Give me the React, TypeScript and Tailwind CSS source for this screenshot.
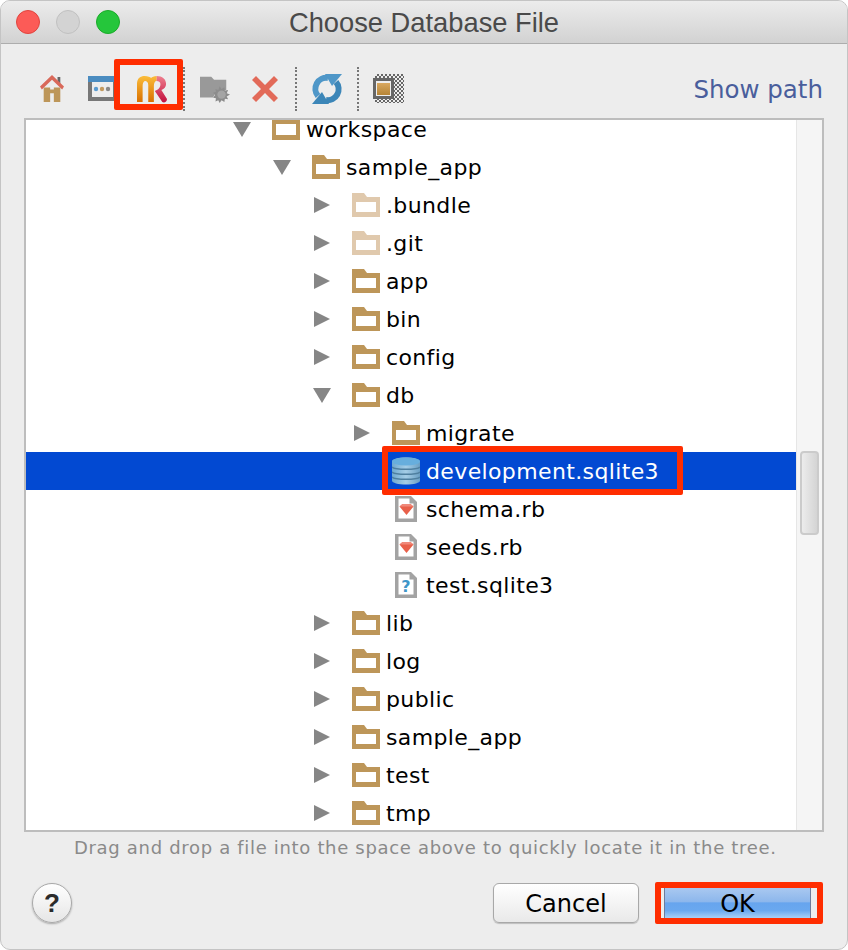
import React from "react";

const SANS = "font-['DejaVu_Sans',sans-serif]";

function Folder({ light }: { light?: boolean }) {
  const c = light ? "#e0c9ad" : "#bd9659";
  return (
    <svg width="28" height="24" viewBox="0 0 28 24" className="block">
      <path fillRule="evenodd" fill={c} d="M0 0H12L15 4H28V24H0ZM4 9V19H24V9Z" />
    </svg>
  );
}
function Workspace() {
  return (
    <svg width="28" height="20" viewBox="0 0 28 20" className="mt-[2px] block">
      <path fillRule="evenodd" fill="#bd9659" d="M0 0H28V20H0ZM4 4V15H24V4Z" />
    </svg>
  );
}
function Db() {
  return (
    <svg width="28" height="28" viewBox="0 0 28 28" className="block">
      <defs>
        <linearGradient id="dbg" x1="0" x2="1" y1="0" y2="0">
          <stop offset="0" stopColor="#6fa9cf" />
          <stop offset="0.5" stopColor="#a5cde6" />
          <stop offset="1" stopColor="#6a9fc4" />
        </linearGradient>
      </defs>
      <path fill="url(#dbg)" d="M0 4.5C0 2 6 0.5 14 0.5S28 2 28 4.5V23.5C28 26 22 27.5 14 27.5S0 26 0 23.5Z" />
      <ellipse cx="14" cy="4.5" rx="14" ry="4" fill="#67aedd" />
      <g fill="none" stroke="#4f7f9f" strokeWidth="1.4">
        <path d="M0 10C3 13 25 13 28 10" />
        <path d="M0 15C3 18 25 18 28 15" />
        <path d="M0 20C3 23 25 23 28 20" />
      </g>
    </svg>
  );
}
function FileIcon({ kind }: { kind: "ruby" | "q" }) {
  return (
    <svg width="22" height="26" viewBox="0 0 22 26" className="block">
      <path fill="#a3a3a3" d="M0 0H16L22 6V26H0Z" />
      <path fill="#fff" d="M3.5 2.5H14.5V7.5H18.5V22.5H3.5Z" />
      {kind === "ruby" ? (
        <>
          <path fill="#e8604a" d="M4.5 10.5L7.5 8H15.5L18.5 10.5L11.5 19Z" />
          <path fill="#f0897a" d="M4.5 10.5L7.5 8H15.5L18.5 10.5Z" />
        </>
      ) : (
        <text x="11" y="20" textAnchor="middle" fontSize="16" fontWeight="700" fill="#3f96c9" fontFamily="'DejaVu Sans',sans-serif">
          ?
        </text>
      )}
    </svg>
  );
}

function Arrow({ open }: { open?: boolean }) {
  return open ? (
    <svg width="18" height="15" viewBox="0 0 18 15" className="block">
      <path d="M0 0H18L9 15Z" fill="#868686" />
    </svg>
  ) : (
    <svg width="16" height="16" viewBox="0 0 16 16" className="ml-[1px] block">
      <path d="M0 0L16 8L0 16Z" fill="#868686" />
    </svg>
  );
}

type Row = {
  name: string;
  pad: string;
  arrow?: "open" | "closed";
  icon: "ws" | "folder" | "light" | "db" | "ruby" | "q";
  selected?: boolean;
};

const rows: Row[] = [
  { name: "workspace", pad: "pl-[207px]", arrow: "open", icon: "ws" },
  { name: "sample_app", pad: "pl-[247px]", arrow: "open", icon: "folder" },
  { name: ".bundle", pad: "pl-[287px]", arrow: "closed", icon: "light" },
  { name: ".git", pad: "pl-[287px]", arrow: "closed", icon: "light" },
  { name: "app", pad: "pl-[287px]", arrow: "closed", icon: "folder" },
  { name: "bin", pad: "pl-[287px]", arrow: "closed", icon: "folder" },
  { name: "config", pad: "pl-[287px]", arrow: "closed", icon: "folder" },
  { name: "db", pad: "pl-[287px]", arrow: "open", icon: "folder" },
  { name: "migrate", pad: "pl-[327px]", arrow: "closed", icon: "folder" },
  { name: "development.sqlite3", pad: "pl-[327px]", icon: "db", selected: true },
  { name: "schema.rb", pad: "pl-[327px]", icon: "ruby" },
  { name: "seeds.rb", pad: "pl-[327px]", icon: "ruby" },
  { name: "test.sqlite3", pad: "pl-[327px]", icon: "q" },
  { name: "lib", pad: "pl-[287px]", arrow: "closed", icon: "folder" },
  { name: "log", pad: "pl-[287px]", arrow: "closed", icon: "folder" },
  { name: "public", pad: "pl-[287px]", arrow: "closed", icon: "folder" },
  { name: "sample_app", pad: "pl-[287px]", arrow: "closed", icon: "folder" },
  { name: "test", pad: "pl-[287px]", arrow: "closed", icon: "folder" },
  { name: "tmp", pad: "pl-[287px]", arrow: "closed", icon: "folder" },
];

function RowIcon({ icon }: { icon: Row["icon"] }) {
  if (icon === "ws") return <Workspace />;
  if (icon === "folder") return <Folder />;
  if (icon === "light") return <Folder light />;
  if (icon === "db") return <Db />;
  if (icon === "ruby") return <FileIcon kind="ruby" />;
  return <FileIcon kind="q" />;
}

function Sep() {
  return <div className="h-[44px] w-0 border-l-2 border-dotted border-[#777]" />;
}

function Mr() {
  return (
    <svg width="30" height="28" viewBox="0 0 32 28" preserveAspectRatio="none" className="block">
      <defs>
        <linearGradient id="mro" x1="0" x2="0" y1="0" y2="1">
          <stop offset="0" stopColor="#fbbd3a" />
          <stop offset="1" stopColor="#d96f00" />
        </linearGradient>
        <linearGradient id="mrr" x1="0" x2="0" y1="0" y2="1">
          <stop offset="0" stopColor="#ef7f8e" />
          <stop offset="1" stopColor="#c2103f" />
        </linearGradient>
      </defs>
      <path fill="url(#mro)" d="M0 27V9C0 3 4 1 8 1C12 1 14 2 15 3C16 2 18 1 21 1V6C19 6 18 8 18 11V27H12V10C12 7 10 6 9 6C7 6 6 8 6 11V27Z" />
      <path fill="url(#mrr)" d="M21 1C27 1 31 4 31 9C31 12 29 14 26 15L32 24C32 27 29 28 27 27L19 16C22 15 25 13 25 9C25 7 23 6 21 6Z" />
    </svg>
  );
}

function Toolbar() {
  return (
    <div className="flex h-[74px] items-center pl-[39px] pr-[24px] pt-[15px]">
      <svg width="24" height="28" viewBox="0 0 26 29" preserveAspectRatio="none" className="block">
        <path d="M19 2H22V9L19 7Z" fill="#666" />
        <path d="M4 13H22V28H15V19H11V28H4Z" fill="#bd9659" />
        <path d="M13 0L26 12L24 15L13 5L2 15L0 12Z" fill="#d9695a" />
        <rect x="11" y="12" width="4" height="3" fill="#eee" />
      </svg>
      <svg width="29" height="25" viewBox="0 0 29 25" className="ml-[24px] block">
        <path d="M0 0H29V6H0Z" fill="#4b8cc0" />
        <path fillRule="evenodd" d="M0 6H29V25H0ZM4 6V21H25V6Z" fill="#777" />
        <circle cx="8" cy="13" r="2.2" fill="#5a9bd0" />
        <circle cx="14" cy="13" r="2.2" fill="#c39a5f" />
        <circle cx="20" cy="13" r="2.2" fill="#888" />
      </svg>
      <div className="ml-[20px]">
        <Mr />
      </div>
      <div className="ml-[16px]">
        <Sep />
      </div>
      <svg width="30" height="28" viewBox="0 0 32 30" preserveAspectRatio="none" className="ml-[15px] block">
        <path d="M0 2H12L15 5H28V16H18L14 24H0Z" fill="#999" />
        <path
          d="M21 12L23 15L26 13L26.5 16.5L30 16L28.5 19.5L32 21L28.5 23L30 26L26.5 25.5L26 29L23 27L21 30L19.5 27L16.5 28.5L17 25L14 24.5L16 21.5L14 19L17 18L16.5 15L19.5 16Z"
          fill="#8c8c8c"
        />
        <circle cx="23" cy="21" r="4.5" fill="#a5a5a5" />
      </svg>
      <svg width="26" height="26" viewBox="0 0 26 26" className="ml-[22px] block">
        <path d="M4 0L13 9L22 0L26 4L17 13L26 22L22 26L13 17L4 26L0 22L9 13L0 4Z" fill="#e26a59" />
      </svg>
      <div className="ml-[17px]">
        <Sep />
      </div>
      <svg width="30" height="30" viewBox="0 0 30 30" className="ml-[15px] block">
        <path d="M6 22A11 11 0 0 1 16 4" fill="none" stroke="#4f97c8" strokeWidth="6" />
        <path d="M13 0H30L20 12Z" fill="#4f97c8" />
        <path d="M24 8A11 11 0 0 1 14 26" fill="none" stroke="#3c86b8" strokeWidth="6" />
        <path d="M0 30H17L10 18Z" fill="#3c86b8" />
      </svg>
      <div className="ml-[15px]">
        <Sep />
      </div>
      <svg width="31" height="29" viewBox="0 0 31 29" className="ml-[14px] block">
        <defs>
          <pattern id="chk" width="4" height="4" patternUnits="userSpaceOnUse">
            <rect width="2" height="2" fill="#666" />
            <rect x="2" y="2" width="2" height="2" fill="#666" />
          </pattern>
          <linearGradient id="tx" x1="0" x2="0" y1="0" y2="1">
            <stop offset="0" stopColor="#d9a860" />
            <stop offset="1" stopColor="#b58436" />
          </linearGradient>
        </defs>
        <rect x="2" y="0" width="29" height="29" fill="url(#chk)" />
        <rect x="0" y="4" width="21" height="21" fill="#666" />
        <rect x="3" y="7" width="15" height="15" fill="#eee" />
        <rect x="4" y="9" width="13" height="12" fill="url(#tx)" />
      </svg>
      <div className={`ml-auto mt-[4px] text-[24.5px] leading-none text-[#4a5e9c] ${SANS}`}>Show path</div>
    </div>
  );
}

function Tree() {
  return (
    <div className="mx-[23px] flex h-[714px] overflow-hidden border-2 border-[#bdbdbd] bg-white">
      <div className="w-[770px] -mt-[10px]">
        {rows.map((r, i) => (
          <div
            key={i}
            className={`relative flex h-[38px] items-center ${r.pad} ${r.selected ? "bg-[#0249d2] text-white" : "text-black"}`}
          >
            <div className="flex w-[39px] shrink-0 items-center">
              {r.arrow === "open" && <Arrow open />}
              {r.arrow === "closed" && <Arrow />}
            </div>
            <div className="flex w-[28px] shrink-0 justify-center">
              <RowIcon icon={r.icon} />
            </div>
            <span className={`ml-[6px] mt-[2px] whitespace-nowrap text-[22px] leading-[18px] tracking-[0.37px] ${SANS}`}>{r.name}</span>
            {r.selected && (
              <div className="absolute left-[356px] top-[-6px] h-[49px] w-[301px] rounded-[2px] border-[6px] border-[#ff2d00]" />
            )}
          </div>
        ))}
      </div>
      <div className="flex-1 border-l border-[#e6e6e6] bg-[#f5f5f5] pl-[3px] pt-[331px]">
        <div className="h-[84px] w-[19px] rounded-[4px] border-2 border-[#cbcbcb] bg-gradient-to-r from-[#ececec] to-[#d4d4d4]" />
      </div>
    </div>
  );
}

export default function App() {
  return (
    <div className="relative h-[950px] w-[848px] overflow-hidden bg-white">
      <div className="h-full overflow-hidden rounded-[10px] border border-[#c4c4c4] bg-[#ededed]">
        <div className="grid h-[43px] grid-cols-[1fr_auto_1fr] items-center border-b border-[#adadad] bg-gradient-to-b from-[#ececec] to-[#d2d2d2]">
          <div className="flex gap-[16px] pl-[15px]">
            <div className="h-[24px] w-[24px] rounded-full border border-[#e0443e] bg-[#fc5b57]" />
            <div className="h-[24px] w-[24px] rounded-full border border-[#c0c0c0] bg-[#d3d3d3]" />
            <div className="h-[24px] w-[24px] rounded-full border border-[#1aab29] bg-[#25c63b]" />
          </div>
          <div className="pt-[2px] font-['Liberation_Sans',sans-serif] text-[27.3px] leading-none text-[#4a4a4a]">Choose Database File</div>
          <div />
        </div>
        <Toolbar />
        <Tree />
        <div className={`mt-[6px] pl-[73px] text-[18px] leading-[20px] tracking-[0.68px] whitespace-nowrap text-[#8a8a8a] ${SANS}`}>
          Drag and drop a file into the space above to quickly locate it in the tree.
        </div>
        <div className="mt-[25px] flex items-center pl-[31px] pr-[36px]">
          <div className="flex h-[40px] w-[40px] items-center justify-center rounded-full border border-[#a8a8a8] bg-gradient-to-b from-white to-[#e6e6e6] font-['Liberation_Sans',sans-serif] text-[26px] font-bold text-[#2b2b2b] shadow-[0_1px_2px_rgba(0,0,0,0.3)]">
            ?
          </div>
          <button className={`ml-auto flex h-[40px] w-[146px] items-center justify-center rounded-[6px] border border-[#a8a8a8] bg-gradient-to-b from-white to-[#e9e9e9] pt-[2px] text-[24px] text-black shadow-[0_1px_1px_rgba(0,0,0,0.2)] ${SANS}`}>
            Cancel
          </button>
          <div className="relative ml-[25px] flex h-[30px] w-[147px] items-center justify-center border-x border-[#6e7b9a] bg-[linear-gradient(to_bottom,#a9c8f0_0%,#8db7ec_45%,#67a5ee_50%,#6aa8ef_75%,#a9d0f6_100%)]">
            <span className={`pt-[2px] text-[24px] leading-none text-black ${SANS}`}>OK</span>
            <div className="absolute -left-[10px] -top-[6px] h-[42px] w-[168px] rounded-[2px] border-[6px] border-[#ff2d00]" />
          </div>
        </div>
      </div>
      <div className="absolute left-[114px] top-[59px] h-[51px] w-[69px] rounded-[2px] border-[6px] border-[#ff2d00]" />
    </div>
  );
}
